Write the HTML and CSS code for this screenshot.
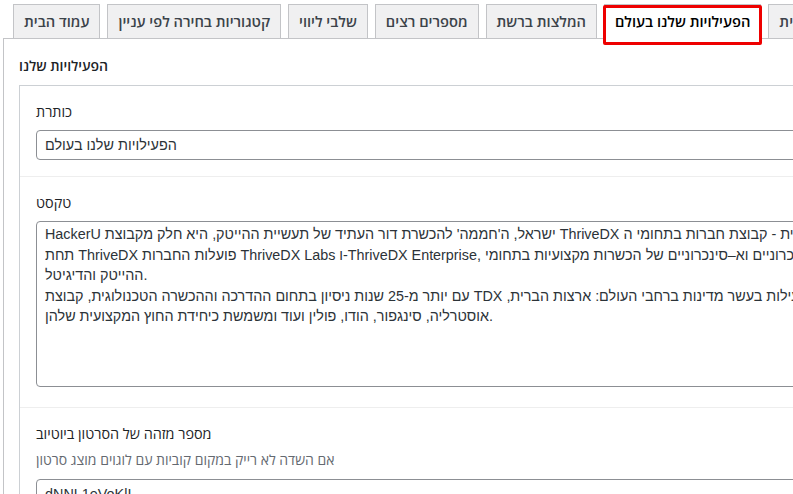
FILE: index.html
```html
<!DOCTYPE html>
<html lang="he">
<head>
<meta charset="utf-8">
<title>הפעילויות שלנו</title>
<link rel="stylesheet" href="styles.css">
</head>
<body>
<div class="wrap">
  <nav class="tabs">
    <a class="tab">עמוד הבית</a>
    <a class="tab">קטגוריות בחירה לפי עניין</a>
    <a class="tab">שלבי ליווי</a>
    <a class="tab">מספרים רצים</a>
    <a class="tab">המלצות ברשת</a>
    <a class="tab active">הפעילויות שלנו בעולם<span class="highlight"></span></a>
    <a class="tab">תחתית</a>
  </nav>
  <div class="panel">
    <div class="group-label">הפעילויות שלנו</div>
    <div class="group">
      <div class="field">
        <div class="label">כותרת</div>
        <input class="input" type="text" value="הפעילויות שלנו בעולם">
      </div>
      <div class="field">
        <div class="label">טקסט</div>
        <div class="textarea">
          <div class="line">HackerU ישראל, ה'חממה' להכשרת דור העתיד של תעשיית ההייטק, היא חלק מקבוצת ThriveDX הבינלאומית - קבוצת חברות בתחומי ה</div>
          <div class="line">תחת ThriveDX פועלות החברות ThriveDX Labs ו-ThriveDX Enterprise, המספקות פתרונות לימוד סינכרוניים וא–סינכרוניים של הכשרות מקצועיות בתחומי</div>
          <div class="line">ההייטק והדיגיטל.</div>
          <div class="line">עם יותר מ-25 שנות ניסיון בתחום ההדרכה וההכשרה הטכנולוגית, קבוצת TDX מקיימת פעילות בעשר מדינות ברחבי העולם: ארצות הברית,&#x200F;</div>
          <div class="line">אוסטרליה, סינגפור, הודו, פולין ועוד ומשמשת כיחידת החוץ המקצועית שלהן.</div>
        </div>
      </div>
      <div class="field">
        <div class="label">מספר מזהה של הסרטון ביוטיוב</div>
        <div class="desc">אם השדה לא רייק במקום קוביות עם לוגוים מוצג סרטון</div>
        <input class="input" type="text" value="dNNL1eVoKlI">
      </div>
    </div>
  </div>
</div>
</body>
</html>
```

FILE: styles.css
```css
html, body {
  margin: 0;
  padding: 0;
  background: #fff;
  overflow: hidden;
}

body {
  font-family: "Liberation Sans", "Open Sans", sans-serif;
  font-size: 14px;
  color: #1d2327;
}

.wrap {
  width: 1300px;
  margin-left: 3px;
  padding-top: 4px;
}

.tabs {
  display: flex;
  gap: 7px;
  padding-left: 10px;
  border-bottom: 1px solid #c3c4c7;
}

.tab {
  display: block;
  position: relative;
  padding: 4px 10px 5px;
  line-height: 24px;
  font-family: "Open Sans", "Liberation Sans", sans-serif;
  font-size: 14.7px;
  font-weight: 600;
  color: #3c434a;
  background: #f0f0f1;
  border: 1px solid #c3c4c7;
  border-bottom: 0;
  white-space: nowrap;
}

.tab.active {
  background: #fff;
  color: #000;
  margin-bottom: -1px;
  padding-bottom: 6px;
}

.highlight {
  position: absolute;
  left: -2px;
  right: -2px;
  top: 0;
  bottom: -6px;
  border: 3px solid #ee0000;
  border-radius: 2px;
}

.panel {
  border-left: 1px solid #c3c4c7;
  padding: 17px 0 0 15px;
}

.group-label {
  font-family: "Open Sans", "Liberation Sans", sans-serif;
  font-weight: 600;
  line-height: 20px;
  margin-bottom: 9px;
}

.group {
  border: 1px solid #ccd0d4;
}

.field {
  padding: 16px 16px 16px;
  border-top: 1px solid #eeeeee;
}

.field:first-child {
  border-top: 0;
}

.label {
  font-family: "Open Sans", "Liberation Sans", sans-serif;
  font-size: 14.4px;
  font-weight: 500;
  line-height: 20px;
  margin-bottom: 8px;
}

.input {
  display: block;
  box-sizing: border-box;
  width: 100%;
  height: 30px;
  margin: 0;
  padding: 0 8px;
  border: 1px solid #8c8f94;
  border-radius: 4px;
  font-family: inherit;
  font-size: 14.4px;
  color: #2c3338;
  direction: ltr;
}

.textarea {
  box-sizing: border-box;
  height: 166px;
  padding: 2px 8px;
  border: 1px solid #8c8f94;
  border-radius: 4px;
  font-size: 14.35px;
  line-height: 20.5px;
  color: #2c3338;
  direction: ltr;
  margin-bottom: 4px;
}

.line {
  white-space: pre;
}

.desc {
  font-family: "Open Sans", "Liberation Sans", sans-serif;
  font-size: 14px;
  color: #646970;
  line-height: 20px;
  margin: -2px 0 9px;
}
```
